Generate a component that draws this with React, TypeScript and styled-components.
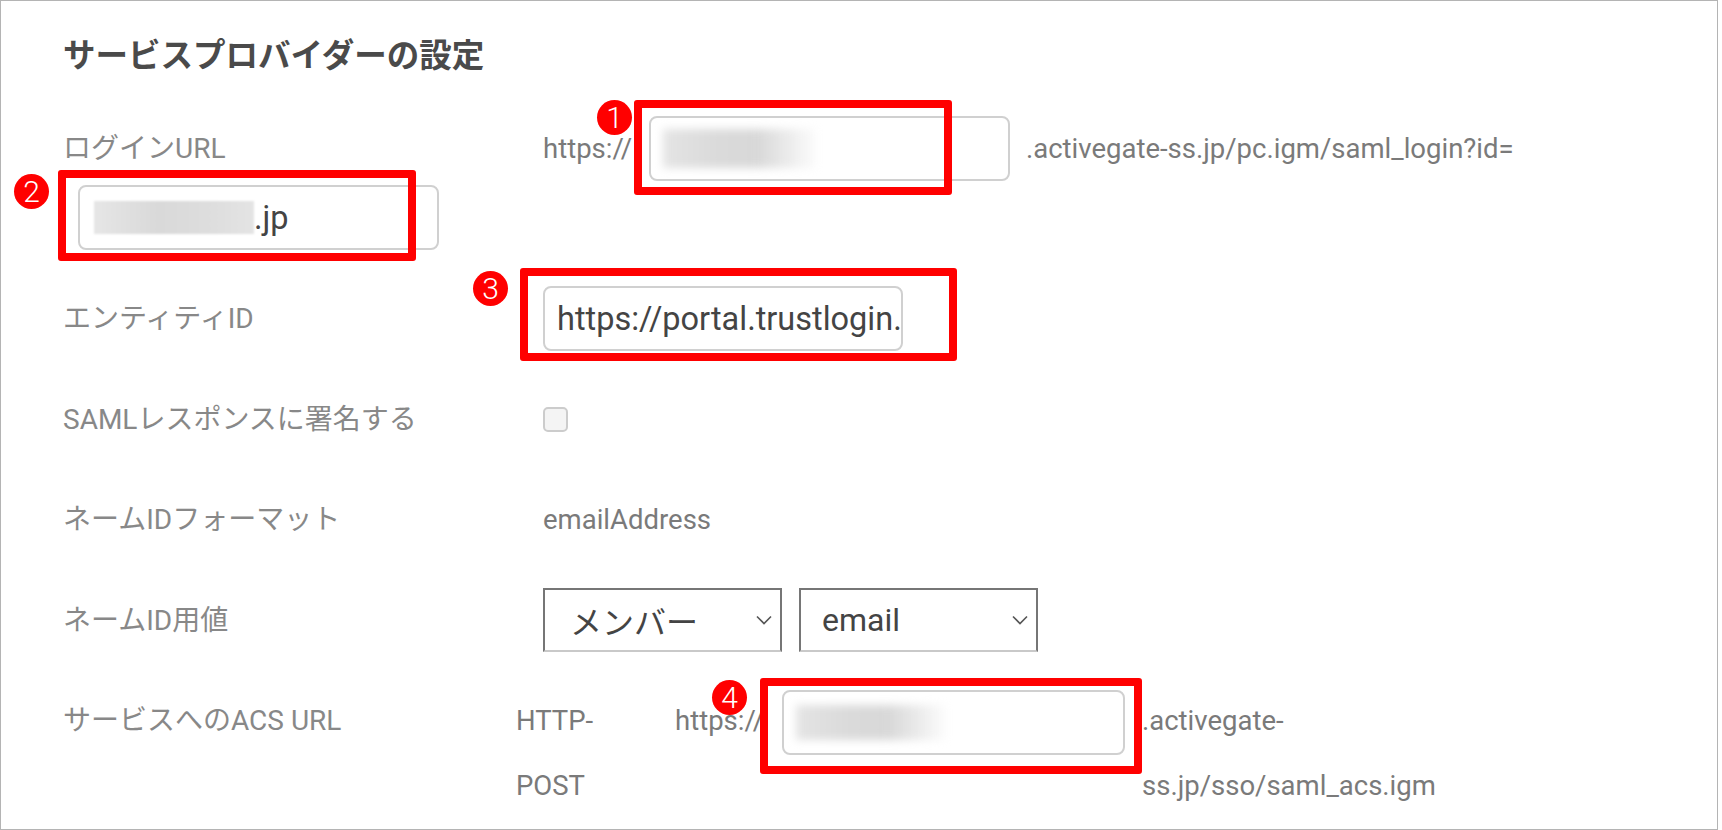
import React from "react";
import styled, { createGlobalStyle } from "styled-components";

const GlobalStyle = createGlobalStyle`
  html, body {
    margin: 0;
    padding: 0;
    background: #ffffff;
  }

  body {
    font-family: Roboto, "Noto Sans CJK JP", "Noto Sans", sans-serif;
  }
`;

const Frame = styled.div`
  box-sizing: border-box;
  width: 1718px;
  height: 830px;
  border: 1px solid #b4b4b4;
  padding: 31px 0 0 62px;
  background: #ffffff;
  overflow: hidden;
`;

const Title = styled.h2`
  margin: 0;
  font-size: 32.5px;
  line-height: 48px;
  font-weight: 700;
  color: #4a4a4a;
`;

const Row = styled.div<{ $height?: number; $top?: number }>`
  display: flex;
  align-items: center;
  height: ${(p) => (p.$height ? `${p.$height}px` : "auto")};
  margin-top: ${(p) => p.$top ?? 0}px;
`;

const WrapRow = styled.div`
  display: flex;
  flex-wrap: wrap;
  align-items: center;
  row-gap: 2px;
  margin-top: 36px;
`;

const LineBreak = styled.div`
  flex-basis: 100%;
  height: 0;
`;

const Label = styled.div<{ $width?: number }>`
  flex: none;
  width: ${(p) => p.$width ?? 480}px;
  font-size: 28px;
  line-height: 65px;
  color: #888888;
  white-space: nowrap;
`;

const Value = styled.span<{ $gap?: number; $width?: number }>`
  flex: none;
  display: inline-block;
  width: ${(p) => (p.$width ? `${p.$width}px` : "auto")};
  font-size: 27.5px;
  line-height: 65px;
  color: #7a7a7a;
  white-space: nowrap;
  margin-left: ${(p) => p.$gap ?? 0}px;
`;

const Marked = styled.div<{ $gap?: number; $drop?: number }>`
  position: relative;
  flex: none;
  margin-left: ${(p) => p.$gap ?? 0}px;
  margin-top: ${(p) => p.$drop ?? 0}px;
`;

const Field = styled.div<{ $width: number }>`
  box-sizing: border-box;
  display: flex;
  align-items: center;
  width: ${(p) => p.$width}px;
  height: 65px;
  padding: 0 12px;
  border: 2px solid #d0d0d0;
  border-radius: 8px;
  background: #ffffff;
  font-size: 32.5px;
  color: #444444;
  white-space: nowrap;
  overflow: hidden;
`;

const Blur = styled.span<{ $w: number; $h: number; $fade?: boolean }>`
  flex: none;
  display: block;
  width: ${(p) => p.$w}px;
  height: ${(p) => p.$h}px;
  background: ${(p) =>
    p.$fade
      ? "linear-gradient(90deg, #e4e4e4 0%, #dadada 35%, #d8d8d8 60%, rgba(230,230,230,0) 100%)"
      : "linear-gradient(90deg, #e6e6e6 0%, #d9d9d9 40%, #dedede 75%, #e4e4e4 100%)"};
  filter: blur(${(p) => (p.$fade ? 4 : 1)}px);
`;

const RedBox = styled.div<{ $l: number; $t: number; $w: number; $h: number }>`
  position: absolute;
  box-sizing: border-box;
  left: ${(p) => p.$l}px;
  top: ${(p) => p.$t}px;
  width: ${(p) => p.$w}px;
  height: ${(p) => p.$h}px;
  border: 8px solid #ff0000;
  border-radius: 3px;
  pointer-events: none;
`;

const Badge = styled.div<{ $l: number; $t: number }>`
  position: absolute;
  left: ${(p) => p.$l}px;
  top: ${(p) => p.$t}px;
  width: 35px;
  height: 35px;
  border-radius: 50%;
  background: #ff0000;
  color: #ffffff;
  font-size: 30px;
  font-weight: 300;
  line-height: 35px;
  text-align: center;
`;

const CheckBox = styled.span`
  box-sizing: border-box;
  display: block;
  width: 25px;
  height: 25px;
  border: 2px solid #cccccc;
  border-radius: 5px;
  background: #f4f4f4;
`;

const Select = styled.div<{ $pad: number }>`
  box-sizing: border-box;
  display: flex;
  align-items: center;
  justify-content: space-between;
  width: 239px;
  height: 64px;
  padding: 0 8px 0 ${(p) => p.$pad}px;
  border: 2px solid #767676;
  border-bottom-color: #c9c9c9;
  font-size: 32px;
  color: #444444;
  & + & {
    margin-left: 17px;
  }
`;

const Cell = styled.div<{ $width?: number; $gap?: number }>`
  flex: none;
  width: ${(p) => (p.$width ? `${p.$width}px` : "auto")};
  margin-left: ${(p) => p.$gap ?? 0}px;
  font-size: 27.5px;
  line-height: 65px;
  color: #7a7a7a;
  white-space: nowrap;
`;

const Chevron = () => (
  <svg width="16" height="10" viewBox="0 0 16 10">
    <path d="M1 1.5 L8 8.5 L15 1.5" fill="none" stroke="#555" strokeWidth="1.6" />
  </svg>
);

export default function App() {
  return (
    <>
      <GlobalStyle />
      <Frame>
        <Title>サービスプロバイダーの設定</Title>

        <WrapRow>
          <Label>ログインURL</Label>
          <Value $width={85}>https://</Value>
          <Marked $gap={21}>
            <Field $width={361}>
              <Blur $w={157} $h={39} $fade />
            </Field>
            <RedBox $l={-15} $t={-16} $w={318} $h={95} />
            <Badge $l={-52} $t={-16}>1</Badge>
          </Marked>
          <Value $gap={16}>.activegate-ss.jp/pc.igm/saml_login?id=</Value>
          <LineBreak />
          <Marked $gap={15}>
            <Field $width={361} style={{ paddingLeft: 14 }}>
              <Blur $w={160} $h={33} />
              <span>.jp</span>
            </Field>
            <RedBox $l={-20} $t={-15} $w={358} $h={91} />
            <Badge $l={-64} $t={-11}>2</Badge>
          </Marked>
        </WrapRow>

        <Row $height={101} $top={18}>
          <Label>エンティティID</Label>
          <Marked>
            <Field $width={360}>https://portal.trustlogin.com/</Field>
            <RedBox $l={-23} $t={-18} $w={437} $h={93} />
            <Badge $l={-70} $t={-15}>3</Badge>
          </Marked>
        </Row>

        <Row $height={100}>
          <Label>SAMLレスポンスに署名する</Label>
          <CheckBox />
        </Row>

        <Row $height={100}>
          <Label>ネームIDフォーマット</Label>
          <Value>emailAddress</Value>
        </Row>

        <Row $height={102}>
          <Label>ネームID用値</Label>
          <Select $pad={25}>
            <span>メンバー</span>
            <Chevron />
          </Select>
          <Select $pad={21}>
            <span>email</span>
            <Chevron />
          </Select>
        </Row>

        <Row $top={17} style={{ alignItems: "flex-start" }}>
          <Label $width={453}>サービスへのACS URL</Label>
          <Cell $width={159}>
            HTTP-
            <br />
            POST
          </Cell>
          <Cell $width={83}>https://</Cell>
          <Marked $gap={24} $drop={2}>
            <Field $width={343}>
              <Blur $w={154} $h={35} $fade />
            </Field>
            <RedBox $l={-22} $t={-12} $w={382} $h={96} />
            <Badge $l={-70} $t={-10}>4</Badge>
          </Marked>
          <Cell $gap={17}>
            .activegate-
            <br />
            ss.jp/sso/saml_acs.igm
          </Cell>
        </Row>
      </Frame>
    </>
  );
}
